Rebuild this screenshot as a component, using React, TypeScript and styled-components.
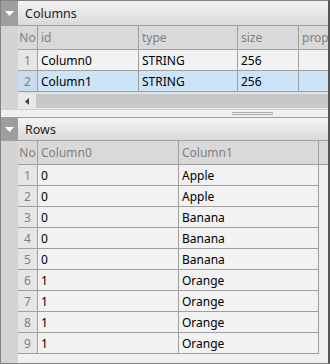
import React from "react";
import styled, { createGlobalStyle } from "styled-components";

const GlobalStyle = createGlobalStyle`
  html, body {
    margin: 0;
    padding: 0;
    background: #ffffff;
  }
  * {
    box-sizing: border-box;
  }
`;

const GRID = "#a0a0a0";

const Frame = styled.div`
  width: 330px;
  height: 364px;
  display: flex;
  flex-direction: column;
  border: 1px solid #828282;
  border-right: 2px solid #555555;
  background: #f0f0f0;
  font-family: "Noto Sans", "Open Sans", sans-serif;
  font-size: 12px;
  overflow: hidden;
`;

const Panel = styled.div<{ $grow?: boolean }>`
  display: flex;
  flex-direction: column;
  flex: ${(p) => (p.$grow ? "1" : "none")};
  min-height: 0;
`;

const PanelHeader = styled.div<{ $h: number }>`
  height: ${(p) => p.$h}px;
  flex: none;
  display: flex;
  align-items: stretch;
  background: linear-gradient(#f4f4f4, #d9d9d9);
  border-bottom: 1px solid ${GRID};
`;

const Toggle = styled.div`
  width: 17px;
  background: #9e9e9e;
  display: flex;
  align-items: center;
  justify-content: center;
`;

const Title = styled.div`
  padding-left: 7px;
  display: flex;
  align-items: center;
  color: #1e1e1e;
  font-size: 12.5px;
`;

const PanelBody = styled.div`
  flex: 1;
  display: flex;
  min-height: 0;
`;

const Strip = styled.div`
  width: 17px;
  flex: none;
  background: #d4d4d4;
`;

const Table = styled.div`
  flex: 1;
  display: flex;
  flex-direction: column;
  overflow: hidden;
  min-width: 0;
`;

const Row = styled.div<{ $head?: boolean }>`
  display: flex;
  height: ${(p) => (p.$head ? "24px" : "21px")};
  flex: none;
`;

const Cell = styled.div<{ $w: number; $head?: boolean; $sel?: boolean; $no?: boolean; $last?: boolean }>`
  width: ${(p) => p.$w}px;
  flex: none;
  display: flex;
  align-items: center;
  justify-content: ${(p) => (p.$no ? "center" : "flex-start")};
  padding-left: ${(p) => (p.$no ? "0" : "3px")};
  white-space: nowrap;
  overflow: hidden;
  border-right: ${(p) => (p.$last ? "none" : `1px solid ${GRID}`)};
  border-bottom: 1px solid ${GRID};
  color: ${(p) => (p.$head || p.$no ? "#808080" : "#000000")};
  background: ${(p) =>
    p.$head ? "#d9d9d9" : p.$sel ? (p.$no ? "#c9dcee" : "#cce4f7") : p.$no ? "#e6e6e6" : "#f2f2f2"};
`;

const Filler = styled.div<{ $head?: boolean }>`
  flex: 1;
  border-bottom: ${(p) => (p.$head ? `1px solid ${GRID}` : "none")};
  background: ${(p) => (p.$head ? "#d9d9d9" : "transparent")};
`;

const HScroll = styled.div`
  height: 17px;
  flex: none;
  display: flex;
  background: #e8e8e8;
  border-top: 1px solid #dcdcdc;
`;

const ScrollBtn = styled.div`
  width: 17px;
  display: flex;
  align-items: center;
  justify-content: center;
`;

const Thumb = styled.div`
  flex: 1;
  margin: 1px 0 1px 1px;
  background: #c8c8c8;
`;

const Splitter = styled.div`
  height: 9px;
  flex: none;
  display: flex;
  align-items: center;
  justify-content: flex-end;
  padding-right: 55px;
  background: #f0f0f0;
  border-top: 1px solid #d0d0d0;
  border-bottom: 1px solid ${GRID};
`;

const Grip = styled.div`
  width: 41px;
  height: 3px;
  border-top: 1px solid #a8a8a8;
  border-bottom: 1px solid #a8a8a8;
`;

const Spacer = styled.div`
  height: 4px;
  background: #f0f0f0;
`;

const DownArrow = () => (
  <svg width="9" height="5" viewBox="0 0 9 5">
    <path d="M0 0 H9 L4.5 5 Z" fill="#ffffff" />
  </svg>
);

const LeftArrow = () => (
  <svg width="4" height="7" viewBox="0 0 4 7">
    <path d="M4 0 V7 L0 3.5 Z" fill="#404040" />
  </svg>
);

const columnDefs = [
  { id: "Column0", type: "STRING", size: "256" },
  { id: "Column1", type: "STRING", size: "256" },
];

const rows: [string, string][] = [
  ["0", "Apple"],
  ["0", "Apple"],
  ["0", "Banana"],
  ["0", "Banana"],
  ["0", "Banana"],
  ["1", "Orange"],
  ["1", "Orange"],
  ["1", "Orange"],
  ["1", "Orange"],
];

const App: React.FC = () => {
  return (
    <>
      <GlobalStyle />
      <Frame>
        <Panel>
          <PanelHeader $h={25}>
            <Toggle>
              <DownArrow />
            </Toggle>
            <Title>Columns</Title>
          </PanelHeader>
          <PanelBody>
            <Strip />
            <Table>
              <Row $head>
                <Cell $w={20} $head $no>No</Cell>
                <Cell $w={101} $head>id</Cell>
                <Cell $w={99} $head>type</Cell>
                <Cell $w={61} $head>size</Cell>
                <Cell $w={40} $head>prop</Cell>
              </Row>
              {columnDefs.map((c, i) => (
                <Row key={c.id}>
                  <Cell $w={20} $no $sel={i === 1}>{i + 1}</Cell>
                  <Cell $w={101} $sel={i === 1}>{c.id}</Cell>
                  <Cell $w={99} $sel={i === 1}>{c.type}</Cell>
                  <Cell $w={61} $sel={i === 1}>{c.size}</Cell>
                  <Cell $w={40} $sel={i === 1} />
                </Row>
              ))}
              <HScroll>
                <ScrollBtn>
                  <LeftArrow />
                </ScrollBtn>
                <Thumb />
              </HScroll>
            </Table>
          </PanelBody>
          <Splitter>
            <Grip />
          </Splitter>
        </Panel>
        <Panel $grow>
          <PanelHeader $h={23}>
            <Toggle>
              <DownArrow />
            </Toggle>
            <Title>Rows</Title>
          </PanelHeader>
          <PanelBody>
            <Strip />
            <Table>
              <Row $head>
                <Cell $w={20} $head $no>No</Cell>
                <Cell $w={141} $head>Column0</Cell>
                <Cell $w={140} $head>Column1</Cell>
                <Filler $head />
              </Row>
              {rows.map((r, i) => (
                <Row key={i}>
                  <Cell $w={20} $no>{i + 1}</Cell>
                  <Cell $w={141}>{r[0]}</Cell>
                  <Cell $w={140}>{r[1]}</Cell>
                  <Filler />
                </Row>
              ))}
              <Spacer />
            </Table>
          </PanelBody>
        </Panel>
      </Frame>
    </>
  );
};

export default App;
